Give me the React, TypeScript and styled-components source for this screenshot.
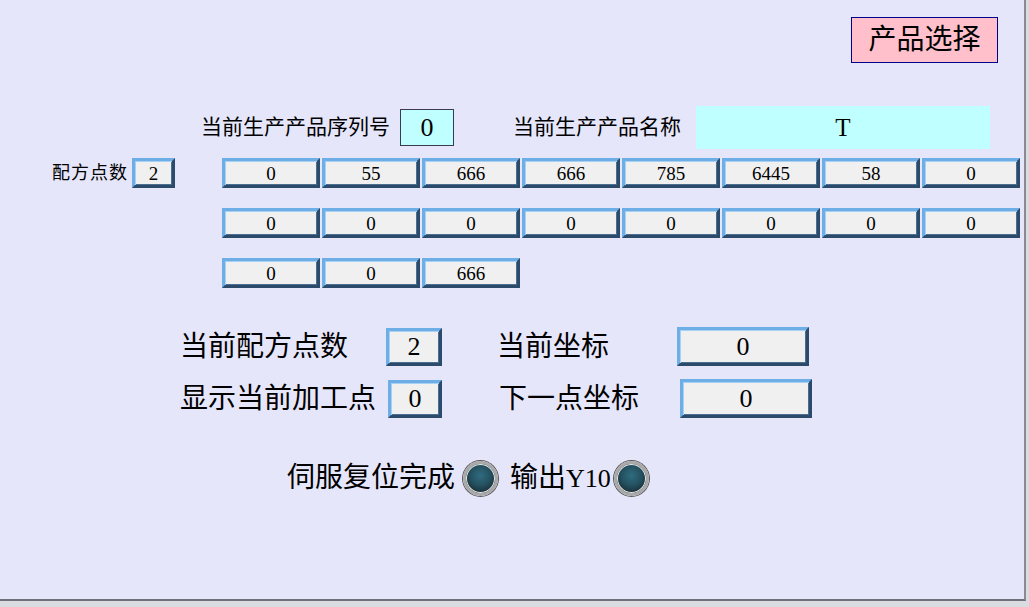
import React from "react";
import styled, { createGlobalStyle } from "styled-components";

const Global = createGlobalStyle`
  html, body { margin: 0; padding: 0; background: #d9dde2; }
  body { font-family: "Liberation Serif", "Noto Sans CJK SC", serif; color: #000; }
  * { box-sizing: border-box; }
`;

const Screen = styled.div`
  width: 1029px;
  height: 607px;
  background: #d9dde2;
  overflow: hidden;
`;

const Panel = styled.div`
  width: 1026px;
  height: 601px;
  background: #e6e6fa;
  border-right: 2px solid #8a8a94;
  border-bottom: 2px solid #707078;
  display: flex;
  flex-direction: column;
  overflow: hidden;
`;

const TopBar = styled.div`
  display: flex;
  justify-content: flex-end;
  padding: 17px 26px 0 0;
`;

const PinkButton = styled.button`
  width: 147px;
  height: 46px;
  background: #ffc0cb;
  border: 1px solid #00008b;
  font-family: "Liberation Serif", "Noto Sans CJK SC", serif;
  font-size: 28px;
  line-height: 1;
  padding: 0;
  color: #000;
  display: flex;
  align-items: center;
  justify-content: center;
`;

const ProductRow = styled.div`
  display: flex;
  align-items: center;
  height: 43px;
  margin-top: 43px;
  padding-left: 201px;
`;

const Label = styled.span<{ $fs: number; $ls?: number }>`
  font-size: ${(p) => p.$fs}px;
  letter-spacing: ${(p) => p.$ls ?? 0}px;
  line-height: 1;
  white-space: nowrap;
`;

const CyanBox = styled.div<{ $w: number; $h: number; $fs: number; $border?: boolean; $ml: number }>`
  width: ${(p) => p.$w}px;
  height: ${(p) => p.$h}px;
  margin-left: ${(p) => p.$ml}px;
  background: #c0ffff;
  border: ${(p) => (p.$border ? "1px solid #3a3a50" : "none")};
  font-size: ${(p) => p.$fs}px;
  display: flex;
  align-items: center;
  justify-content: center;
  line-height: 1;
`;

const RecipeRow = styled.div`
  display: flex;
  align-items: flex-start;
  margin-top: 9px;
  padding-left: 52px;
`;

const RecipeHead = styled.div`
  display: flex;
  align-items: center;
  height: 30px;
  gap: 4px;
`;

const Grid = styled.div`
  display: grid;
  grid-template-columns: repeat(8, 98px);
  grid-auto-rows: 30px;
  column-gap: 2px;
  row-gap: 20px;
  margin-left: 47px;
`;

const Field = styled.div<{ $w: number; $h: number; $fs: number; $ml?: number }>`
  width: ${(p) => p.$w}px;
  height: ${(p) => p.$h}px;
  margin-left: ${(p) => p.$ml ?? 0}px;
  background: #f0f0f0;
  border-style: solid;
  border-width: 3px;
  border-color: #6eaee6 #2c4a6a #2c4a6a #6eaee6;
  box-shadow: inset 1px 1px 0 #a8d0f2, inset -1px -1px 0 #4a6e92;
  display: flex;
  align-items: center;
  justify-content: center;
  font-size: ${(p) => p.$fs}px;
  line-height: 1;
`;

const StatusGrid = styled.div`
  display: grid;
  grid-template-columns: 206px 56px 235px 134px;
  grid-template-rows: 39px 39px;
  row-gap: 13px;
  align-items: center;
  margin-top: 39px;
  padding-left: 180px;
`;

const StatusLabel = styled.span<{ $pl?: number; $ml?: number }>`
  font-size: 28px;
  line-height: 1;
  padding-left: ${(p) => p.$pl ?? 0}px;
  margin-left: ${(p) => p.$ml ?? 0}px;
  white-space: nowrap;
`;

const Latin = styled.span`
  font-size: 26px;
`;

const LampRow = styled.div`
  display: flex;
  align-items: center;
  margin-top: 42px;
  padding-left: 287px;
  height: 36px;
`;

const Lamp = styled.div<{ $ml: number }>`
  width: 35px;
  height: 35px;
  margin-left: ${(p) => p.$ml}px;
  border-radius: 50%;
  background: radial-gradient(circle at 50% 40%, #2f6c80 0%, #24505f 45%, #1a2f38 75%, #101c22 100%);
  border: 3px solid #a9a9a9;
  box-shadow: 0 0 0 1px #5a5a5a, inset 0 0 0 1px #e8e8e8;
`;

const grid = ["0", "55", "666", "666", "785", "6445", "58", "0", "0", "0", "0", "0", "0", "0", "0", "0", "0", "0", "666"];

export default function App() {
  return (
    <Screen>
      <Global />
      <Panel>
        <TopBar>
          <PinkButton>产品选择</PinkButton>
        </TopBar>
        <ProductRow>
          <Label $fs={21}>当前生产产品序列号</Label>
          <CyanBox $w={54} $h={37} $fs={26} $border $ml={10}>0</CyanBox>
          <Label $fs={21} style={{ marginLeft: 59 }}>当前生产产品名称</Label>
          <CyanBox $w={294} $h={43} $fs={25} $ml={15}>T</CyanBox>
        </ProductRow>
        <RecipeRow>
          <RecipeHead>
            <Label $fs={18} $ls={1}>配方点数</Label>
            <Field $w={43} $h={30} $fs={19}>2</Field>
          </RecipeHead>
          <Grid>
            {grid.map((v, i) => (
              <Field key={i} $w={98} $h={30} $fs={19}>{v}</Field>
            ))}
          </Grid>
        </RecipeRow>
        <StatusGrid>
          <StatusLabel>当前配方点数</StatusLabel>
          <Field $w={56} $h={38} $fs={26}>2</Field>
          <StatusLabel $pl={55}>当前坐标</StatusLabel>
          <Field $w={132} $h={39} $fs={26}>0</Field>
          <StatusLabel>显示当前加工点</StatusLabel>
          <Field $w={54} $h={38} $fs={26} $ml={2}>0</Field>
          <StatusLabel $pl={57}>下一点坐标</StatusLabel>
          <Field $w={132} $h={39} $fs={26} $ml={3}>0</Field>
        </StatusGrid>
        <LampRow>
          <StatusLabel>伺服复位完成</StatusLabel>
          <Lamp $ml={8} />
          <StatusLabel $ml={12}>输出<Latin>Y10</Latin></StatusLabel>
          <Lamp $ml={3} />
        </LampRow>
      </Panel>
    </Screen>
  );
}
